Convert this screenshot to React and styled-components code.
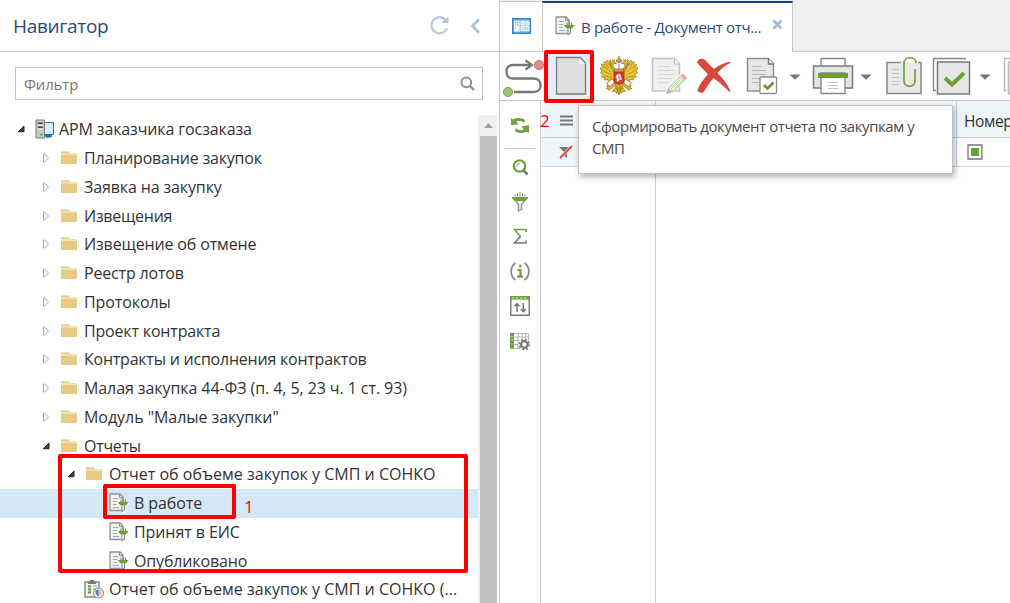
import React from 'react';
import styled, { createGlobalStyle } from 'styled-components';

const Global = createGlobalStyle`
  * { box-sizing: border-box; }
  body { margin: 0; overflow: hidden; font-family: 'Open Sans', 'Noto Sans', sans-serif; color: #333; }
  svg { display: block; flex: none; }
`;

const Screen = styled.div`
  position: relative;
  display: flex;
  width: 1010px;
  height: 603px;
  overflow: hidden;
  background: #fff;
`;

/* Navigator */
const Navigator = styled.aside`
  display: flex;
  flex-direction: column;
  flex: none;
  width: 500px;
  border-right: 1px solid #c8c8c8;
`;
const NavHeader = styled.header`
  display: flex;
  align-items: center;
  flex: none;
  height: 52px;
  padding: 0 18px 0 13px;
  border-bottom: 1px solid #c8c8c8;
`;
const NavTitle = styled.h1`
  flex: 1;
  margin: 0;
  font-size: 19px;
  font-weight: 400;
  line-height: 50px;
  letter-spacing: ${(p) => p.$ls}px;
  color: #2a4a7c;
`;
const HeaderActions = styled.div`
  display: flex;
  align-items: center;
  gap: 21px;
`;
const FilterBox = styled.div`
  display: flex;
  align-items: center;
  justify-content: space-between;
  flex: none;
  height: 33px;
  margin: 15px 16px 0 15px;
  padding: 0 7px 0 8px;
  border: 1px solid #c4c4c4;
`;
const Placeholder = styled.span`
  font-size: 15px;
  letter-spacing: -0.15px;
  color: #777;
`;
const TreeArea = styled.div`
  display: flex;
  flex: 1;
  min-height: 0;
  margin-top: 15px;
  padding-right: 2px;
`;
const Tree = styled.ul`
  flex: 1;
  min-width: 0;
  margin: 0;
  padding: 0;
  list-style: none;
`;
const TreeRow = styled.li`
  display: flex;
  align-items: center;
  height: 28.75px;
  padding-left: ${(p) => p.$indent}px;
  background: ${(p) => (p.$selected ? '#d6e8f6' : 'transparent')};
`;
const Expander = styled.span`
  width: ${(p) => p.$w}px;
  flex: none;
`;
const TreeIcon = styled.span`
  width: ${(p) => p.$w}px;
  flex: none;
`;
const TreeLabel = styled.span`
  font-size: 16px;
  line-height: 28px;
  white-space: nowrap;
  letter-spacing: ${(p) => p.$ls}px;
`;
const Scrollbar = styled.div`
  display: flex;
  flex-direction: column;
  flex: none;
  width: 19px;
  padding: 0 0 0 2px;
  background: #f0f0f0;
`;
const ScrollUp = styled.div`
  display: flex;
  align-items: center;
  justify-content: center;
  height: 21px;
`;
const ScrollThumb = styled.div`
  flex: 1;
  background: #c1c1c1;
`;

/* Workspace */
const Workspace = styled.main`
  display: flex;
  flex-direction: column;
  flex: 1;
  min-width: 0;
`;
const TabBar = styled.div`
  display: flex;
  flex: none;
  height: 52px;
  padding-top: 1px;
  background: #f0f0f0;
`;
const HomeTab = styled.div`
  display: flex;
  align-items: center;
  justify-content: center;
  width: 42px;
  padding-bottom: 2px;
  border-top: 1px solid #c8c8c8;
  border-bottom: 1px solid #c8c8c8;
  background: #fff;
`;
const DocTab = styled.div`
  display: flex;
  align-items: center;
  width: 251px;
  padding: 0 9px 3px 12px;
  border: solid #c8c8c8;
  border-width: 0 1px;
  border-top: 2px solid #173f73;
  background: #fff;
`;
const TabLabel = styled.span`
  flex: 1;
  margin-left: 6px;
  font-size: 15px;
  line-height: 20px;
  padding-top: 2px;
  white-space: nowrap;
  letter-spacing: ${(p) => p.$ls}px;
  color: #2a4a7c;
`;
const TabClose = styled.span`
  padding-bottom: 3px;
`;
const TabRest = styled.div`
  flex: 1;
  border-bottom: 1px solid #c8c8c8;
`;
const Toolbar = styled.div`
  display: flex;
  align-items: center;
  flex: none;
  height: 49px;
  overflow: hidden;
  border-bottom: 1px solid #c3c7cc;
`;
const ToolButton = styled.div`
  display: flex;
  align-items: center;
  justify-content: center;
  flex: none;
  width: ${(p) => p.$w}px;
  height: 48px;
  padding-top: ${(p) => p.$drop || 0}px;
  margin-left: ${(p) => p.$gap || 0}px;
  background: ${(p) => (p.$active ? '#e7eef9' : 'transparent')};
`;
const Content = styled.div`
  display: flex;
  flex: 1;
  min-height: 0;
`;
const SideTools = styled.nav`
  display: flex;
  flex-direction: column;
  align-items: center;
  flex: none;
  width: 41px;
  padding-top: 7px;
  border-right: 1px solid #c8c8c8;
`;
const SideTool = styled.div`
  display: flex;
  align-items: center;
  justify-content: center;
  width: 30px;
  height: 34.8px;
`;
const SideDivider = styled.div`
  width: 30px;
  height: 1px;
  margin: 5px 0 1px;
  background: #c8c8c8;
`;
const Grid = styled.div`
  display: grid;
  grid-template-columns: 114px 301px 1fr;
  grid-template-rows: 37px 29px 1fr;
  flex: 1;
  min-width: 0;
  padding-left: 1px;
`;
const Cell = styled.div`
  display: flex;
  align-items: center;
  min-width: 0;
  padding-left: ${(p) => p.$pad || 0}px;
  padding-top: ${(p) => p.$drop || 0}px;
  border-right: ${(p) => (p.$last ? '0' : '1px solid #c3d2e2')};
  border-bottom: 1px solid ${(p) => (p.$head ? '#c6ccd2' : '#c9dbea')};
  background: ${(p) => (p.$plain ? '#fff' : '#eef6fa')};
`;
const EmptyColumn = styled.div`
  border-right: ${(p) => (p.$line ? '1px solid #c3d2e2' : '0')};
`;
const HeadText = styled.span`
  font-size: 15.5px;
  letter-spacing: -0.4px;
  white-space: nowrap;
`;

/* Overlays */
const Tooltip = styled.div`
  position: absolute;
  left: 578px;
  top: 105px;
  width: 375px;
  height: 69px;
  padding: 10px 13px;
  border: 1px solid #c2c2c2;
  background: #fff;
  box-shadow: 2px 3px 6px rgba(0, 0, 0, 0.3);
  font-size: 15px;
  line-height: 21.5px;
  letter-spacing: ${(p) => p.$ls}px;
  color: #4c4c4c;
`;
const Mark = styled.div`
  position: absolute;
  left: ${(p) => p.$x}px;
  top: ${(p) => p.$y}px;
  width: ${(p) => p.$w}px;
  height: ${(p) => p.$h}px;
  border: 4px solid #f00;
  border-radius: 2px;
`;
const MarkNumber = styled.span`
  position: absolute;
  left: ${(p) => p.$x}px;
  top: ${(p) => p.$y}px;
  font-size: 17px;
  line-height: 20px;
  color: #f00;
`;

const Collapsed = () => (
  <svg width="8" height="10" viewBox="0 0 8 10"><path d="M1.500 1v8h1.200L6.500 5 2.700 1z" fill="#fff" stroke="#a6a6a6" /></svg>
);
const Expanded = () => (
  <svg width="8" height="8" viewBox="0 0 8 8"><path d="M7 1v5.700H1.300z" fill="#444" stroke="#222" /></svg>
);
const FolderIcon = () => (
  <svg width="16" height="14" viewBox="0 0 16 14">
    <path d="M0 0h8l1 2h7v1H0z" fill="#f1deb3" />
    <path d="M0 1h7.4l2 2.4H16V13H0z" fill="#e8ca85" />
    <path d="M0 3h7.500l2-1.500H16" fill="none" stroke="#fff" strokeWidth=".8" />
  </svg>
);
const ServerIcon = () => (
  <svg width="20" height="20" viewBox="0 0 20 20">
    <path d="M9 3.500h9.500v12H9z" fill="#cfe8fb" stroke="#2f72b8" />
    <path d="M10 4.500h7.500v10L10 15z" fill="#d8eefc" />
    <path d="M8 15.500h9V18l-5 1z" fill="#276eac" />
    <path d="M1 1h8.500v18H1z" fill="#c9cbcb" stroke="#77797a" />
    <path d="M2.800 4.300h5M2.800 8.300h5" stroke="#444" strokeWidth="1.500" />
    <path d="M2.800 6.300h5M2.800 10.300h5" stroke="#eee" />
    <path d="M5 15.600h2.500" stroke="#58a630" strokeWidth="1.600" />
  </svg>
);
const ReportIcon = () => (
  <svg width="20" height="20" viewBox="0 0 20 20">
    <path d="M1 1h10l3 3v13.500H1z" fill="#f1f1f1" stroke="#909394" strokeWidth="1.300" />
    <path d="M10.600 1v3.700H14" fill="none" stroke="#85898a" />
    <path d="M4 5.500h5M4 8.500h4M4 11.500h4M4 14.500h6" stroke="#a4a7a8" />
    <path d="M9 10.500l3.700 3V20h3.200v-6.500l3.700-3z" fill="#fff" stroke="#fff" strokeWidth="1.600" />
    <path d="M12.900 12v6.500l2.600-1.500v-5" fill="#fff" stroke="#85888a" strokeWidth="1.100" />
    <path d="M8.800 9h10.800l-2.300 3.200h-6.200z" fill="#6fa03a" />
    <path d="M12 6.500v3M14.200 5.500v4M16.500 6.500v3" stroke="#77903f" strokeWidth="1.100" />
  </svg>
);
const ClipboardIcon = () => (
  <svg width="20" height="20" viewBox="0 0 20 20">
    <path d="M1 3h14v15H1z" fill="#f0f0f0" stroke="#858585" strokeWidth="1.400" />
    <path d="M4 3.500C5 3.500 5 .7 8 .7s3 2.800 4 2.800V5H4z" fill="#777" />
    <path d="M4 7.400h3M4 10.400h3M4 13.400h3" stroke="#68a436" strokeWidth="2.200" />
    <path d="M9 7h4M9 10h3" stroke="#999" />
    <circle cx="14.500" cy="14" r="5" fill="#efefef" stroke="#8a8a8a" />
    <path d="M14.500 10.300c1 .8 2.200 1 3.200 1 0 3.200-.9 5-3.200 6.200z" fill="#eac75c" />
    <path d="M14.500 10.300c-1 .8-2.200 1-3.200 1 0 3.200.9 5 3.200 6.200z" fill="#4289c7" />
  </svg>
);
const SigmaIcon = () => (
  <svg width="15" height="17" viewBox="0 0 15 17">
    <path d="M13 4V1.500H1.500l6 6.900" fill="none" stroke="#70a13c" strokeWidth="1.600" />
    <path d="M13 12.500V15H1.500l6-6.600" fill="none" stroke="#777" strokeWidth="1.600" />
  </svg>
);
const RefreshGreen = () => (
  <svg width="18" height="17" viewBox="0 0 18 17">
    <path d="M0 1l2 1.400C6 .2 11 .5 14 3l-1 3C10.500 3.500 8 3.300 5.300 4.600L7.500 7.500 0 8z" fill="#70a13c" />
    <path d="M18 16l-2-1.400C12 16.800 7 16.500 4 14l1-3c2.500 2.500 5 2.700 7.700 1.400L10.500 9.500 18 8z" fill="#70a13c" />
  </svg>
);
const SearchGreen = () => (
  <svg width="17" height="17" viewBox="0 0 17 17">
    <path d="M11.500 11.500l4 4" stroke="#777" strokeWidth="2.600" />
    <circle cx="7.500" cy="7" r="5.700" fill="#fff" stroke="#70a13c" strokeWidth="2.300" />
    <path d="M4.800 8C4.500 5.800 6 4.300 8 4.400" fill="none" stroke="#9abf76" strokeWidth="1.200" />
  </svg>
);
const FunnelGreen = () => (
  <svg width="18" height="20" viewBox="0 0 18 20">
    <path d="M1.500 5.500L7.300 12v7l3.400-1.800V12l5.800-6.500" fill="#fff" stroke="#8b8e90" strokeWidth="1.200" />
    <path d="M9 11v6" stroke="#bbb" />
    <path d="M.5 5h17l-3.600 4H4.100z" fill="#70a13c" />
    <path d="M4 2.500v2M6.500 1.500v3M9 0v4.500M11.500 1.500v3M14 2.500v2" stroke="#848a80" />
  </svg>
);
const InfoIcon = () => (
  <svg width="20" height="19" viewBox="0 0 20 19">
    <path d="M5.500 1C-.3 5.200-.3 13.500 5.500 18M14.500 1c5.800 4.200 5.800 12.500 0 17" fill="none" stroke="#85888a" strokeWidth="1.700" />
    <path d="M10.300 2.800v2.800M7.500 8.200h3v6M7.300 14.500h5.600" fill="none" stroke="#70a13c" strokeWidth="2.300" />
  </svg>
);
const SortIcon = () => (
  <svg width="20" height="20" viewBox="0 0 20 20">
    <path d="M.8.800h18.400v18.400H.8z" fill="#fff" stroke="#75797b" strokeWidth="1.400" />
    <path d="M0 0h20v3.600H0z" fill="#70a13c" />
    <path d="M2 2h16" stroke="#d7e8c8" strokeDasharray="2.500 1.500" />
    <path d="M7 16V8M4.500 10.300L7 7.700l2.500 2.600M13.300 7v8.500M10.800 13l2.500 2.600 2.500-2.600" fill="none" stroke="#75797b" strokeWidth="1.500" />
  </svg>
);
const TableGear = () => (
  <svg width="20" height="19" viewBox="0 0 20 19">
    <path d="M1 1.500h17.500v15H1zM4 5h14M4 8.500h14M4 12.500h12M8 1v15M12 1v15M15.500 1v15" fill="none" stroke="#b4b7b9" />
    <path d="M0 1h4v15.500H0z" fill="#70a13c" />
    <path d="M0 4.500h4M0 8h4M0 12h4" stroke="#b9d49d" strokeWidth=".7" />
    <circle cx="14.300" cy="12.500" r="5.800" fill="#fff" />
    <circle cx="14.300" cy="12.500" r="3.300" fill="#fff" stroke="#73777a" strokeWidth="2.200" />
    <circle cx="14.300" cy="12.500" r="5" fill="none" stroke="#73777a" strokeWidth="1.600" strokeDasharray="1.900 2.030" />
  </svg>
);
const HomeIcon = () => (
  <svg width="19" height="16" viewBox="0 0 19 16">
    <path d="M.7.700h17.600v14.600H.7z" fill="#8fc3ee" stroke="#3580ca" strokeWidth="1.400" />
    <path d="M2 3h5.500v10.500H2z" fill="#f2f7fb" />
    <path d="M9 3.500h3.500V7H9zM14 3.500h3V7h-3zM9 8.500h8v4H9z" fill="#c5e2fa" stroke="#eef8ff" />
    <path d="M3 4.500h1M3 7h1" stroke="#d36a3d" /><path d="M5 4.500h1.500M5 7h1.500M3 10h1" stroke="#5594c9" />
  </svg>
);
const RouteIcon = () => (
  <svg width="42" height="44" viewBox="0 0 42 44">
    <path d="M28 11H10.500C2.500 11 2.500 24.500 10.500 24.500h21C41 24.500 41 38 31.500 38H12" fill="none" stroke="#75797b" strokeWidth="2.400" />
    <path d="M23.500 6.500l6.500 4.500-6.500 4.500" fill="none" stroke="#75797b" strokeWidth="2.200" />
    <circle cx="37" cy="11" r="4.600" fill="#e78b89" stroke="#d0716e" />
    <circle cx="6" cy="38" r="4.600" fill="#9dc377" stroke="#79a553" />
  </svg>
);
const BlankDoc = () => (
  <svg width="32" height="40" viewBox="0 0 32 40">
    <path d="M1.500 1.500h24l5 5.500v31h-29z" fill="#dfdfdf" stroke="#787b7d" strokeWidth="1.300" />
    <path d="M25 1.500l5.500 6V7l-5-5.500z" fill="#fff" stroke="#85898b" />
    <path d="M24.500 2.500v5h5z" fill="#fff" />
  </svg>
);
const Wing = () => (
  <g>
    <path d="M16 16C12.500 14 11 10 11.500 4.500L9.500 6.500 8 5 7.300 8 5 6.500 5.300 9.500 2.500 9 3.500 12.500 1 13l2 3-1.500 1.500L4 19.500 2.500 22l3.500.5L5.500 25l3.500-.5.500 2.500 3.500-3 3 3z" fill="#e2bd2c" stroke="#a1842b" strokeWidth=".8" />
    <path d="M5 11.500l7 6.500M7.500 9.500l6 7M9.700 8.500l4.300 7M4.500 16l8 4.500M6 20.500l7 2" stroke="#a3811c" strokeWidth=".8" fill="none" />
    <path d="M5.500 13l6.500 5.500M4.500 18l8 3.500M9 10l4.500 6.500" stroke="#fae577" strokeWidth=".9" fill="none" />
    <path d="M17.500 17c.5-3-4-4-3.500-7 .3-1.500 1.500-2 3-1.500C16 5.500 12.500 6 12 8l-1.500 1 1.500.7c0 3 2.500 4 2.500 7.300z" fill="#dab427" stroke="#8a6c22" strokeWidth=".7" />
    <path d="M15 27c-1 3-3 4-5 4.500L8 30l.5 2.500-1.500 1 2.500.5.500 1.500 2-2c2-.5 3-2 4-4z" fill="#dcb52b" stroke="#937728" strokeWidth=".7" />
    <path d="M17 31l-3.500 5.500 2.500-.3 1.500 2.300L20 36z" fill="#dcb52b" stroke="#937728" strokeWidth=".7" />
    <path d="M10 31.500L7.500 27" stroke="#b78f30" strokeWidth="1.200" />
  </g>
);
const EagleIcon = () => (
  <svg width="40" height="42" viewBox="0 0 40 42">
    <Wing />
    <g transform="translate(40 0) scale(-1 1)"><Wing /></g>
    <path d="M15.500 14h9v14L20 40l-4.500-12z" fill="#d2aa28" stroke="#937728" strokeWidth=".7" />
    <path d="M12.500 6l.5-1.500h2.500L16 6zM24 6l.5-1.500H27l.5 1.500z" fill="#c79b28" />
    <path d="M20 .8v3M18.700 2h2.600" stroke="#b38a25" />
    <path d="M17.300 6.500C16 3 24 3 22.700 6.500z" fill="#c99a2c" stroke="#8e6c23" strokeWidth=".7" />
    <path d="M20 7v8M16 9c2-2 6-2 8 0" stroke="#5c8cad" strokeWidth=".8" fill="none" />
    <path d="M15 17h10v9.500c0 1.500-3 1.800-5 3-2-1.200-5-1.500-5-3z" fill="#d93a2b" stroke="#9c3526" strokeWidth=".8" />
    <path d="M17.500 20l2-1 2 .5 1.500 5-2.500.5-1.500 2-1.500-1 .5-2.500-1.500-.5z" fill="#dfe5ea" />
    <path d="M19 20.500l2.500 2-1.500 2z" fill="#5b8fba" />
    <path d="M18.500 31v5M21.500 31v5M20 33v6" stroke="#a3811c" strokeWidth=".7" fill="none" />
  </svg>
);
const EditDoc = () => (
  <svg width="38" height="40" viewBox="0 0 38 40">
    <path d="M1.500 1.500h22l5 5V34h-27z" fill="#f0f0f0" stroke="#c1c2c3" strokeWidth="1.600" />
    <path d="M23.500 1.500V7h5" fill="#fff" stroke="#bbb" />
    <path d="M7 9.500h12M7 13.500h16M7 17.500h16M7 21.500h14M7 25.500h10" stroke="#d9d9d9" />
    <path d="M15 37l3-7 13-13 4 4-13 13z" fill="#c6dfad" stroke="#fff" strokeWidth="2.600" />
    <path d="M15.500 36.500l2.500-6L31 17.500l4 4-13 13z" fill="#cfe5ba" stroke="#a9c191" />
    <path d="M19 31l12-12M21 33l12-12" stroke="#fff" />
    <path d="M29.500 19l2.500-2.500 4 4-2.500 2.500z" fill="#eda6a8" />
    <path d="M15.500 36.500l2-4.500 3 3z" fill="#b5b3a7" />
  </svg>
);
const DeleteIcon = () => (
  <svg width="36" height="36" viewBox="0 0 36 36">
    <path d="M1 4C2 1 6-.5 9 2l9 9c4-3 9-6 16-7.500l.5 1.500c-5 2-10 6-13 10 5 5 10 11 13 18l-1 1c-5-5-10-10-16-14-4 5-7 9-9 13-1 3-7 2-7-1 2-6 6-11 10.500-15.500C8.500 12 4 9 1 4z" fill="#d8483e" />
  </svg>
);
const CheckDoc = () => (
  <svg width="32" height="38" viewBox="0 0 32 38">
    <path d="M1.500 1.500h21l5 5V34h-26z" fill="#e7e7e7" stroke="#8b8e90" strokeWidth="1.500" />
    <path d="M22.500 1.500V7h5" fill="#fff" stroke="#74787a" strokeWidth="1.500" />
    <path d="M6 9.500h9M6 13.500h14M6 17.500h14M6 21.500h8M6 25.500h7" stroke="#b5b6b7" />
    <rect x="14" y="20" width="16.500" height="16.500" rx="1" fill="#fff" stroke="#8b8e90" strokeWidth="1.300" />
    <path d="M18 28l3.500 3.500 6-6" fill="none" stroke="#66972f" strokeWidth="2.600" />
  </svg>
);
const CaretIcon = () => (
  <svg width="12" height="6" viewBox="0 0 12 6"><path d="M.5.500h11L6 5.800z" fill="#73777a" /></svg>
);
const PrintIcon = () => (
  <svg width="42" height="38" viewBox="0 0 42 38">
    <path d="M9 9V1.500h24V9" fill="#fff" stroke="#85888a" strokeWidth="1.400" />
    <path d="M1.500 9h39v22h-39z" fill="#e5e5e5" stroke="#75797b" strokeWidth="1.500" />
    <path d="M9 16h24v20.500H9z" fill="#fff" stroke="#85888a" strokeWidth="1.400" />
    <path d="M6 16h30v5H6z" fill="#6b9f35" />
    <path d="M16 25.500h10M16 28.500h10M16 31.500h10" stroke="#c5c5c5" />
  </svg>
);
const AttachIcon = () => (
  <svg width="38" height="40" viewBox="0 0 38 40">
    <path d="M16 6.500H2v31h34V6.500h-3" fill="#e9e9e9" stroke="#85888a" strokeWidth="1.500" />
    <path d="M7 13.500h7M7 17.500h7M7 21.500h7M7 25.500h7M7 28.500h7" stroke="#c3c3c3" />
    <path d="M31 7c0-7-12-7-12 0v18c0 7 11 7 11 0V13" fill="none" stroke="#70a13c" strokeWidth="1.700" />
  </svg>
);
const ApproveIcon = () => (
  <svg width="39" height="39" viewBox="0 0 39 39">
    <path d="M33 3V1.500H1.500v32H4" fill="none" stroke="#85888a" strokeWidth="1.400" />
    <path d="M5.500 5h32v32h-32z" fill="#e6e6e6" stroke="#75797b" strokeWidth="1.500" />
    <path d="M13 21l7 6.500L32 16" fill="none" stroke="#6d9f35" strokeWidth="4" />
  </svg>
);
const NextIcon = () => (
  <svg width="39" height="39" viewBox="0 0 39 39">
    <path d="M33 3V1.500H1.500v32H4" fill="none" stroke="#bbb" strokeWidth="1.400" />
    <path d="M5.500 5h32v32h-32z" fill="#eee" stroke="#bbb" strokeWidth="1.500" />
  </svg>
);

const rows = [
  { text: 'АРМ заказчика госзаказа', level: 0, open: true, icon: 'server', ls: -0.12 },
  { text: 'Планирование закупок', level: 1, ls: -0.19 },
  { text: 'Заявка на закупку', level: 1, ls: -0.13 },
  { text: 'Извещения', level: 1, ls: -0.27 },
  { text: 'Извещение об отмене', level: 1, ls: -0.15 },
  { text: 'Реестр лотов', level: 1, ls: -0.17 },
  { text: 'Протоколы', level: 1, ls: -0.1 },
  { text: 'Проект контракта', level: 1, ls: -0.17 },
  { text: 'Контракты и исполнения контрактов', level: 1, ls: -0.23 },
  { text: 'Малая закупка 44-ФЗ (п. 4, 5, 23 ч. 1 ст. 93)', level: 1, ls: -0.08 },
  { text: 'Модуль "Малые закупки"', level: 1, ls: -0.05 },
  { text: 'Отчеты', level: 1, open: true, ls: -0.3 },
  { text: 'Отчет об объеме закупок у СМП и СОНКО', level: 2, open: true, ls: 0.02 },
  { text: 'В работе', level: 3, icon: 'report', selected: true, ls: -0.1 },
  { text: 'Принят в ЕИС', level: 3, icon: 'report', ls: -0.08 },
  { text: 'Опубликовано', level: 3, icon: 'report', ls: -0.15 },
  { text: 'Отчет об объеме закупок у СМП и СОНКО (...', level: 2, icon: 'clipboard', ls: 0.02 },
];
const treeIcons = { server: ServerIcon, report: ReportIcon, clipboard: ClipboardIcon };

function Row({ text, level, open, icon, selected, ls }) {
  const Icon = treeIcons[icon] || FolderIcon;
  const leaf = icon === 'report' || icon === 'clipboard';
  return (
    <TreeRow $indent={17 + level * 25} $selected={selected}>
      <Expander $w={icon === 'server' ? 18 : icon ? 17 : 19}>{!leaf && (open ? <Expanded /> : <Collapsed />)}</Expander>
      <TreeIcon $w={icon === 'server' ? 24 : icon ? 25 : 23}><Icon /></TreeIcon>
      <TreeLabel $ls={ls}>{text}</TreeLabel>
    </TreeRow>
  );
}

export default function App() {
  return (
    <Screen>
      <Global />
      <Navigator>
        <NavHeader>
          <NavTitle $ls={-0.33}>Навигатор</NavTitle>
          <HeaderActions>
            <svg width="19" height="19" viewBox="0 0 19 19">
              <path d="M15.500 4A8 8 0 1 0 17 12" fill="none" stroke="#bccadc" strokeWidth="2.300" />
              <path d="M11 7h7.500V.5z" fill="#b5c5d9" />
            </svg>
            <svg width="11" height="16" viewBox="0 0 11 16"><path d="M9 1.500L2.500 8 9 14.500" fill="none" stroke="#afc0d7" strokeWidth="2.800" /></svg>
          </HeaderActions>
        </NavHeader>
        <FilterBox>
          <Placeholder>Фильтр</Placeholder>
          <svg width="15" height="15" viewBox="0 0 15 15">
            <circle cx="6.300" cy="6.300" r="4.900" fill="none" stroke="#909090" strokeWidth="2" /><path d="M10 10l4 4" stroke="#909090" strokeWidth="2.400" />
          </svg>
        </FilterBox>
        <TreeArea>
          <Tree>{rows.map((r) => <Row key={r.text} {...r} />)}</Tree>
          <Scrollbar>
            <ScrollUp><svg width="9" height="5" viewBox="0 0 9 5"><path d="M0 5h9L4.500 0z" fill="#a0a0a0" /></svg></ScrollUp>
            <ScrollThumb />
          </Scrollbar>
        </TreeArea>
      </Navigator>

      <Workspace>
        <TabBar>
          <HomeTab><HomeIcon /></HomeTab>
          <DocTab>
            <ReportIcon />
            <TabLabel $ls={-0.33}>В работе - Документ отч...</TabLabel>
            <TabClose>
              <svg width="11" height="11" viewBox="0 0 11 11"><path d="M1.500 1.500l8 8m0-8l-8 8" stroke="#a9b9d0" strokeWidth="2.700" /></svg>
            </TabClose>
          </DocTab>
          <TabRest />
        </TabBar>
        <Toolbar>
          <ToolButton $w={42} $gap={2}><RouteIcon /></ToolButton>
          <ToolButton $w={46} $gap={4} $active><BlankDoc /></ToolButton>
          <ToolButton $w={40} $gap={5}><EagleIcon /></ToolButton>
          <ToolButton $w={38} $gap={12} $drop={2}><EditDoc /></ToolButton>
          <ToolButton $w={36} $gap={7}><DeleteIcon /></ToolButton>
          <ToolButton $w={32} $gap={14}><CheckDoc /></ToolButton>
          <ToolButton $w={12} $gap={11} $drop={2}><CaretIcon /></ToolButton>
          <ToolButton $w={42} $gap={11}><PrintIcon /></ToolButton>
          <ToolButton $w={12} $gap={6} $drop={2}><CaretIcon /></ToolButton>
          <ToolButton $w={38} $gap={13}><AttachIcon /></ToolButton>
          <ToolButton $w={39} $gap={9}><ApproveIcon /></ToolButton>
          <ToolButton $w={12} $gap={8} $drop={2}><CaretIcon /></ToolButton>
          <ToolButton $w={39} $gap={12}><NextIcon /></ToolButton>
        </Toolbar>
        <Content>
          <SideTools>
            <SideTool><RefreshGreen /></SideTool>
            <SideDivider />
            <SideTool><SearchGreen /></SideTool>
            <SideTool><FunnelGreen /></SideTool>
            <SideTool><SigmaIcon /></SideTool>
            <SideTool><InfoIcon /></SideTool>
            <SideTool><SortIcon /></SideTool>
            <SideTool><TableGear /></SideTool>
          </SideTools>
          <Grid>
            <Cell $head $pad={18} $drop={2}>
              <svg width="13" height="11" viewBox="0 0 13 11"><path d="M0 1.500h13M0 5.500h13M0 9.500h13" stroke="#777" strokeWidth="2" /></svg>
            </Cell>
            <Cell $head />
            <Cell $head $last $pad={7} $drop={4}><HeadText>Номер</HeadText></Cell>
            <Cell $pad={17}>
              <svg width="14" height="14" viewBox="0 0 14 14"><path d="M0 2h12L8 7v6l-3-2V7z" fill="#75797b" /><path d="M1 13L13 1" stroke="#fff" strokeWidth="3" /><path d="M1 13L13 1" stroke="#ef3935" strokeWidth="1.800" /></svg>
            </Cell>
            <Cell $plain />
            <Cell $plain $last $pad={10}>
              <svg width="16" height="16" viewBox="0 0 16 16"><path d="M1 1h14v14H1z" fill="#fff" stroke="#75797b" strokeWidth="1.300" /><path d="M4 4h8v8H4z" fill="#6f9f35" /></svg>
            </Cell>
            <EmptyColumn $line />
            <EmptyColumn />
            <EmptyColumn />
          </Grid>
        </Content>
      </Workspace>

      <Tooltip $ls={-0.43}>Сформировать документ отчета по закупкам у СМП</Tooltip>
      <Mark $x={544} $y={50} $w={50} $h={53} />
      <Mark $x={58} $y={454} $w={410} $h={119} />
      <Mark $x={103} $y={484} $w={133} $h={35} />
      <MarkNumber $x={244} $y={497}>1</MarkNumber>
      <MarkNumber $x={540} $y={111}>2</MarkNumber>
    </Screen>
  );
}
